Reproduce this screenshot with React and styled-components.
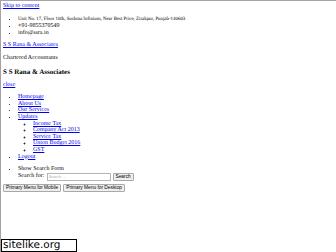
import React from 'react'
import styled, { createGlobalStyle } from 'styled-components'

const GlobalStyle = createGlobalStyle`
    html, body {
        margin: 0;
        padding: 0;
        background: #ffffff;
    }
`
const Frame = styled.div`
    position: relative;
    width: 336px;
    height: 252px;
    box-sizing: border-box;
    border-top: 1px solid #a3a3a3;
    border-left: 1px solid #a3a3a3;
    padding: 2px 2px;
    overflow: hidden;
    font-family: "Liberation Serif", "Times New Roman", serif;
    font-size: 6px;
    line-height: 6.6px;
    color: #000;
    text-rendering: geometricPrecision;
`
const Link = styled.a`
    color: #0000ee;
    text-decoration: underline;
`
const Line = styled.div`
    margin: ${props => props.$margin || '0'};
`
const List = styled.ul`
    margin: ${props => props.$nested ? '0' : props.$margin || '6px 0'};
    padding-left: 15px;
    list-style-type: ${props => props.$nested ? 'circle' : 'disc'};
`
const Item = styled.li``
const Address = styled.span`
    font-size: 4.9px;
`
const Title = styled.h1`
    font-size: 7px;
    line-height: 8px;
    font-weight: bold;
    margin: 6px 0 6px;
`
const Label = styled.label`
    margin-right: 2px;
`
const SearchRow = styled.div`
    display: flex;
    align-items: center;
`
const Input = styled.input`
    width: 60px;
    height: 6px;
    box-sizing: content-box;
    padding: 0 1px;
    border: 1px solid #b5b5b5;
    font-family: "Liberation Sans", Arial, sans-serif;
    font-size: 4px;
    color: #999;
    outline: none;
    &::placeholder {
        color: #aaa;
    }
`
const Button = styled.button`
    font-family: "Liberation Sans", Arial, sans-serif;
    font-size: 4.8px;
    line-height: 6px;
    padding: 0 2px;
    margin-left: ${props => props.$gap || '0'};
    border: 1px solid #a8a8a8;
    border-radius: 1px;
    background: #efefef;
    color: #000;
`
const ButtonRow = styled.div`
    display: flex;
    gap: 2px;
`
const Watermark = styled.div`
    position: absolute;
    left: 0;
    bottom: 0;
    width: 76px;
    height: 13px;
    box-sizing: border-box;
    border: 1px solid #000;
    background: #fff;
    font-family: "DejaVu Sans", Verdana, sans-serif;
    font-size: 10.5px;
    line-height: 11px;
    padding-left: 1px;
    color: #000;
`

const subUpdates = ['Income Tax', 'Company Act 2013', 'Service Tax', 'Union Budget 2016', 'GST']

export default function App() {
    return (
        <Frame>
            <GlobalStyle />
            <Line><Link href="#">Skip to content</Link></Line>
            <List>
                <Item><Address>Unit No. 17, Floor 10th, Sushma Infinium, Near Best Price, Zirakpur, Punjab-140603</Address></Item>
                <Item>+91-9855370549</Item>
                <Item>info@ssra.in</Item>
            </List>
            <Line><Link href="#">S S Rana &amp; Associates</Link></Line>
            <Line $margin="6px 0 0">Chartered Accountants</Line>
            <Title>S S Rana &amp; Associates</Title>
            <Line $margin="0 0 3px"><Link href="#">close</Link></Line>
            <List>
                <Item><Link href="#">Homepage</Link></Item>
                <Item><Link href="#">About Us</Link></Item>
                <Item><Link href="#">Our Services</Link></Item>
                <Item>
                    <Link href="#">Updates</Link>
                    <List $nested>
                        {subUpdates.map(name => (
                            <Item key={name}><Link href="#">{name}</Link></Item>
                        ))}
                    </List>
                </Item>
                <Item><Link href="#">Logout</Link></Item>
            </List>
            <List $margin="6px 0 3px">
                <Item>
                    Show Search Form
                    <SearchRow>
                        <Label>Search for:</Label>
                        <Input placeholder="Search …" />
                        <Button $gap="2px">Search</Button>
                    </SearchRow>
                </Item>
            </List>
            <ButtonRow>
                <Button>Primary Menu for Mobile</Button>
                <Button>Primary Menu for Desktop</Button>
            </ButtonRow>
            <Watermark>sitelike.org</Watermark>
        </Frame>
    )
}
